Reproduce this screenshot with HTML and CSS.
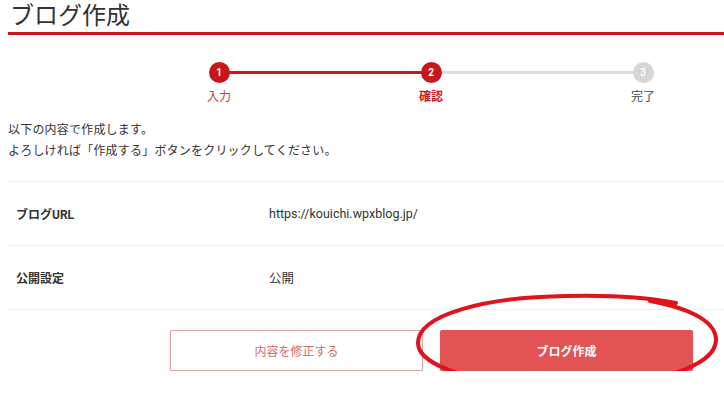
FILE: index.html
```
<!DOCTYPE html>
<html lang="ja">
<head>
  <meta charset="UTF-8"/>
  <meta name="viewport" content="width=device-width, initial-scale=1.0"/>
  <title>ブログ作成</title>
  <link rel="stylesheet" href="styles.css">
</head>
<body>
  <div class="page">
    <h1 class="page-title">ブログ作成</h1>

    <ol class="stepper">
      <li class="step done"><span class="dot">1</span><span class="label">入力</span></li>
      <li class="step current"><span class="dot">2</span><span class="label">確認</span></li>
      <li class="step"><span class="dot">3</span><span class="label">完了</span></li>
    </ol>

    <p class="intro">以下の内容で作成します。<br>よろしければ「作成する」ボタンをクリックしてください。</p>

    <div class="confirm">
      <div class="row">
        <div class="key">ブログURL</div>
        <div class="val">https://kouichi.wpxblog.jp/</div>
      </div>
      <div class="row">
        <div class="key">公開設定</div>
        <div class="val">公開</div>
      </div>
    </div>

    <div class="actions">
      <button class="btn btn-outline">内容を修正する</button>
      <button class="btn btn-primary">ブログ作成</button>
      <!-- hand drawn marker around the submit button -->
      <svg class="marker" width="306" height="98" viewBox="0 0 306 98">
        <path d="M 262 10 C 225 3, 190 2, 152 3 C 70 4, 4 22, 4 50 C 4 75, 72 94, 154 94 C 236 94, 302 74, 302 47 C 302 30, 280 16, 236 8"
              fill="none" stroke="#e0121c" stroke-width="4" stroke-linecap="round"/>
      </svg>
    </div>
  </div>
</body>
</html>
```

FILE: styles.css
```
body {
  margin: 0;
  background: #fff;
  color: #333;
  font-family: Roboto, "Noto Sans CJK JP", sans-serif;
  overflow: hidden;
}
.page {
  margin: 0 0 0 8px;
}
.page-title {
  margin: 0;
  padding-left: 2px;
  font-size: 24px;
  font-weight: 400;
  line-height: 32px;
  height: 32px;
  color: #333;
  border-bottom: 3px solid #c8161d;
}

/* steps */
.stepper {
  list-style: none;
  margin: 27px 0 0;
  padding: 0 0 0 105px;
  display: flex;
  overflow: hidden;
}
.step {
  position: relative;
  flex: none;
  width: 212px;
  display: flex;
  flex-direction: column;
  align-items: center;
}
.step + .step::before {
  content: '';
  position: absolute;
  top: 9px;
  left: -50%;
  width: 100%;
  height: 3px;
  background: #dcdcdc;
}
.step.done + .step::before { background: #c8161d; }
.dot {
  position: relative;
  z-index: 1;
  width: 21px; height: 21px;
  border-radius: 50%;
  background: #d6d6d6;
  color: #fff;
  font-size: 10px;
  font-weight: 700;
  line-height: 21px;
  text-align: center;
}
.step.done .dot, .step.current .dot { background: #c8161d; }
.label {
  margin-top: 6px;
  font-size: 12px;
  line-height: 16px;
  color: #444;
}
.step.done .label { color: #c83a3a; }
.step.current .label { color: #c8161d; font-weight: 700; }

.intro {
  margin: 15px 0 19px;
  font-size: 12px;
  line-height: 21px;
  letter-spacing: 0.2px;
  color: #333;
}

/* confirm table */
.confirm { border-top: 1px solid #efefef; }
.row {
  display: flex;
  align-items: center;
  height: 63px;
  border-bottom: 1px solid #efefef;
  padding-left: 8px;
  font-size: 12px;
}
.key { width: 253px; font-weight: 700; color: #333; }
.val { color: #333; font-size: 12.5px; }

/* buttons */
.actions {
  position: relative;
  display: flex;
  gap: 17px;
  margin-top: 20px;
  padding-left: 162px;
}
.btn {
  width: 253px;
  height: 41px;
  border-radius: 2px;
  font-family: inherit;
  font-size: 12px;
  cursor: pointer;
  box-shadow: 0 1px 2px rgba(0,0,0,0.2);
}
.btn-outline {
  background: #fff;
  border: 1px solid #dba3a3;
  color: #d46a6a;
}
.btn-primary {
  background: #e25353;
  border: none;
  color: #fff;
  font-weight: 700;
}
.marker {
  position: absolute;
  top: -37px;
  left: 406px;
  pointer-events: none;
}
```
